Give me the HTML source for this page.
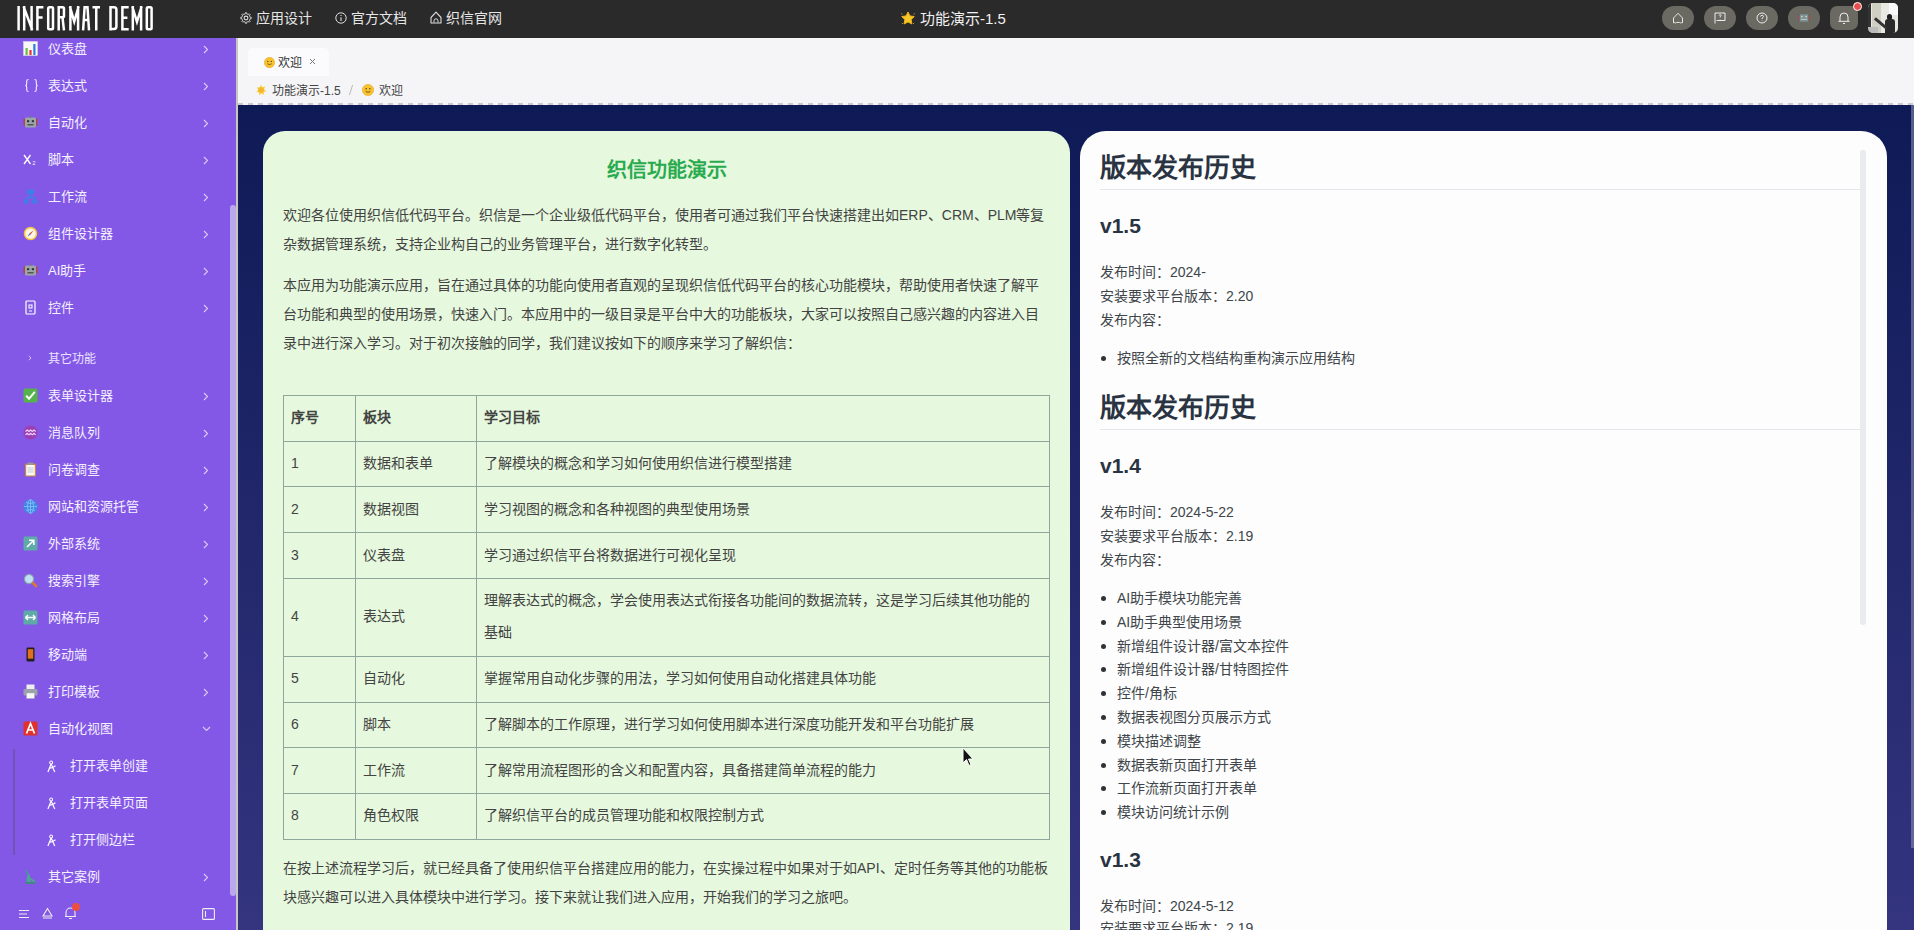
<!DOCTYPE html>
<html lang="zh-CN"><head><meta charset="utf-8">
<style>
*{box-sizing:border-box;margin:0;padding:0}
html,body{width:1914px;height:930px;overflow:hidden;font-family:"Liberation Sans",sans-serif;}
body{position:relative;background:#f4f4f7}
.abs{position:absolute}
#hdr{left:0;top:0;width:1914px;height:38px;background:#2b2a2b;color:#f0f0f0}
#logo{left:17px;top:2px;font-size:30px;line-height:30px;color:#fff;transform-origin:0 0;transform:scaleX(0.42);white-space:nowrap;letter-spacing:2px}
.nav{top:9px;font-size:14px;line-height:18px;color:#e6e6e6;white-space:nowrap}
.hbtn{top:6px;width:32px;height:24px;border-radius:12px;background:#6a6962}
#side{left:0;top:38px;width:236px;height:892px;background:#8358e6;color:#fff;overflow:hidden}
.si{position:absolute;left:0;width:236px;height:20px;font-size:13px;line-height:20px;color:#f4f0ff;white-space:nowrap}
.si .t{position:absolute;left:48px;top:0}
.si .ic{position:absolute;left:23px;top:2px;width:15px;height:15px}
.si .ar{position:absolute;left:203px;top:6px;width:6px;height:9px}
#sbar{left:236px;top:38px;width:2px;height:892px;background:#c9c6c2}
#topa{left:238px;top:38px;width:1676px;height:67px;background:#f5f5f8}
#main{left:238px;top:105px;width:1676px;height:825px;background:linear-gradient(#0e1a56,#34347f)}
#lc{left:263px;top:131px;width:807px;height:830px;background:#e6f8dd;border-radius:22px;color:#333}
#rc{left:1080px;top:131px;width:807px;height:830px;background:#fcfdfc;border-radius:26px;color:#2b2f33}
.ln{position:absolute;white-space:nowrap;font-size:14px;line-height:20px}
.p{position:absolute;left:20px;white-space:nowrap;font-size:14px;line-height:20px;color:#434343}
table{position:absolute;left:20px;top:264px;width:767px;border-collapse:collapse;font-size:14px;color:#434343}
td{border:1px solid #8fa69a;padding:0 7px 2px;height:45.72px;vertical-align:middle;line-height:32px}
.r1 td{font-weight:bold}
.h1{position:absolute;left:20px;font-size:26px;font-weight:bold;line-height:34px;color:#2a3341}
.h2{position:absolute;left:20px;font-size:21px;font-weight:bold;line-height:28px;color:#2a3341}
.hr{position:absolute;left:20px;width:762px;height:1px;background:#e3e6ea}
.q{position:absolute;left:20px;font-size:14px;line-height:20px;color:#40454b;white-space:nowrap}
.li{position:absolute;left:37px;font-size:14px;line-height:20px;color:#40454b;white-space:nowrap}
.li:before{content:"";position:absolute;left:-16px;top:8px;width:5px;height:5px;border-radius:3px;background:#2f3338}

</style></head><body>
<div id="hdr" class="abs">
  <svg class="abs" style="left:0;top:0" width="160" height="38" viewBox="0 0 160 38"><g fill="none" stroke="#fff" stroke-width="2.5" stroke-linejoin="miter" stroke-linecap="butt">
   <path d="M18.6 6v24.4"/>
   <path d="M24.2 30.4V6M23.6 6.6l8.6 23.2M31.6 6v24.4"/>
   <path d="M37.4 30.4V7.25H43.4M37.4 17.5H42.6"/>
   <path d="M48.2 8.5q0-1.25 1.25-1.25h2.3q1.25 0 1.25 1.25v19.5q0 1.25-1.25 1.25h-2.3q-1.25 0-1.25-1.25z"/>
   <path d="M58.7 30.4V7.25h4q1.25 0 1.25 1.25v7.5q0 1.25-1.25 1.25h-4M62.5 17.2l1.45 13.2"/>
   <path d="M70.4 30.4V6M69.9 6.6l4.35 15 4.35-15M78.1 6v24.4"/>
   <path d="M83.1 30.4L84.6 7.25h2.9l1.5 23.15M83.9 20h4.3"/>
   <path d="M92.5 7.25h7.5M96.25 7.25v23.15"/>
   <path d="M110.5 30.4V7.25h3.5q2.4 0 2.4 2.4v16.9q0 2.4-2.4 2.4h-3.5"/>
   <path d="M128.7 7.25h-6.3V29.15h6.3M122.4 17.7h5"/>
   <path d="M132.8 30.4V6M132.3 6.6l4.65 15.2 4.65-15.2M141.1 6v24.4"/>
   <path d="M146.8 8.5q0-1.25 1.25-1.25h2.3q1.25 0 1.25 1.25v19.5q0 1.25-1.25 1.25h-2.3q-1.25 0-1.25-1.25z"/>
  </g></svg>
  <svg class="abs" style="left:240px;top:12px" width="12" height="12" viewBox="0 0 12 12"><circle cx="6" cy="6" r="1.9" fill="none" stroke="#ddd" stroke-width="1.1"/><path d="M9.91 5.14 L11.26 5.32 L11.26 6.68 L9.91 6.86 L9.70 7.53 L9.37 8.16 L10.20 9.23 L9.23 10.20 L8.16 9.37 L7.53 9.70 L6.86 9.91 L6.68 11.26 L5.32 11.26 L5.14 9.91 L4.47 9.70 L3.84 9.37 L2.77 10.20 L1.80 9.23 L2.63 8.16 L2.30 7.53 L2.09 6.86 L0.74 6.68 L0.74 5.32 L2.09 5.14 L2.30 4.47 L2.63 3.84 L1.80 2.77 L2.77 1.80 L3.84 2.63 L4.47 2.30 L5.14 2.09 L5.32 0.74 L6.68 0.74 L6.86 2.09 L7.53 2.30 L8.16 2.63 L9.23 1.80 L10.20 2.77 L9.37 3.84 L9.70 4.47Z" fill="none" stroke="#ddd" stroke-width=".9" stroke-linejoin="round"/></svg>
  <div class="abs nav" style="left:256px">应用设计</div>
  <svg class="abs" style="left:335px;top:12px" width="12" height="12" viewBox="0 0 12 12"><circle cx="6" cy="6" r="5.2" fill="none" stroke="#ddd" stroke-width="1"/><path d="M6 5.2v3.8M6 3v1" stroke="#ddd" stroke-width="1.1"/></svg>
  <div class="abs nav" style="left:351px">官方文档</div>
  <svg class="abs" style="left:430px;top:11px" width="12" height="13" viewBox="0 0 12 13"><path d="M1 6.5L6 1.2l5 5.3V12H1z" fill="none" stroke="#ddd" stroke-width="1.1" stroke-linejoin="round"/><path d="M4 11.5V9.8a2 2 0 0 1 4 0v1.7" fill="none" stroke="#ddd" stroke-width="1"/></svg>
  <div class="abs nav" style="left:446px">织信官网</div>
  <svg class="abs" style="left:900px;top:10px" width="16" height="16" viewBox="0 0 16 16"><path d="M8.00 2.00 L9.94 5.93 L14.28 6.56 L11.14 9.62 L11.88 13.94 L8.00 11.90 L4.12 13.94 L4.86 9.62 L1.72 6.56 L6.06 5.93Z" fill="#f8c82a" stroke="#f0b418" stroke-width="1" stroke-linejoin="round"/><path d="M1.2 3.5l1.2.8M14.8 3.5l-1.2.8M2 14l1-1M14 14l-1-1" stroke="#e8b030" stroke-width=".8"/></svg>
  <div class="abs nav" style="left:920px;font-size:15px;top:10px;color:#f2f2f2">功能演示-1.5</div>
  <div class="abs hbtn" style="left:1662px"><svg class="abs" style="left:10px;top:6px" width="12" height="12" viewBox="0 0 12 12"><path d="M1.5 10.8V6L6 1.3 10.5 6v4.8q-1.5-.6-2.2.2-.6-.8-2.3-.6-1.7-.2-2.3.6-.7-.8-2.2-.2z" fill="none" stroke="#e8e8e8" stroke-width="1"/></svg></div>
  <div class="abs hbtn" style="left:1704px"><svg class="abs" style="left:10px;top:6px" width="12" height="12" viewBox="0 0 12 12"><path d="M1 11.5V1h10v7.5H2.5" fill="none" stroke="#eee" stroke-width="1"/><path d="M5 3.6q.2-1 1.1-1 1 0 1 .9 0 .7-1 1.2v.8M6.1 7v.5" fill="none" stroke="#eee" stroke-width=".9"/></svg></div>
  <div class="abs hbtn" style="left:1746px"><svg class="abs" style="left:10px;top:6px" width="12" height="12" viewBox="0 0 12 12"><circle cx="6" cy="6" r="5" fill="none" stroke="#eee" stroke-width="1"/><path d="M4.4 4.6q.2-1.3 1.6-1.3 1.5 0 1.5 1.2 0 .9-1.4 1.5v1M6.1 8.4v.6" fill="none" stroke="#eee" stroke-width=".9"/></svg></div>
  <div class="abs hbtn" style="left:1788px"><svg class="abs" style="left:10px;top:7px;opacity:.75" width="12" height="10" viewBox="0 0 14 10"><rect x="0" y="2" width="2" height="6" fill="#a04848"/><rect x="12" y="2" width="2" height="6" fill="#a04848"/><rect x="2" y="0.5" width="10" height="9" rx="1" fill="#7fa0a3"/><rect x="3.5" y="2.5" width="2" height="1.6" fill="#eee"/><rect x="8.5" y="2.5" width="2" height="1.6" fill="#eee"/><rect x="3.5" y="6" width="7" height="1.3" fill="#ddd"/></svg></div>
  <div class="abs hbtn" style="left:1830px;width:28px;border-radius:7px"><svg class="abs" style="left:8px;top:5px" width="12" height="14" viewBox="0 0 12 14"><path d="M2 10V6a4 4 0 0 1 8 0v4M.5 10.3h11M5 12.5h2" fill="none" stroke="#eee" stroke-width="1"/></svg></div>
  <div class="abs" style="left:1868px;top:3px;width:30px;height:30px;border-radius:5px;overflow:hidden;background:#e9e9e4">
    <div class="abs" style="left:0;top:0;width:3px;height:30px;background:#333"></div>
    <div class="abs" style="left:4px;top:0;width:9px;height:30px;background:#d0cfc3"></div>
    <div class="abs" style="left:21px;top:0;width:9px;height:12px;background:#fafafa"></div>
    <div class="abs" style="left:19px;top:11px;width:5px;height:6px;border-radius:3px;background:#1e1e1e"></div>
    <div class="abs" style="left:17px;top:16px;width:10px;height:14px;border-radius:3px 3px 0 0;background:#2a2a2a"></div>
    <div class="abs" style="left:5px;top:19px;width:16px;height:3px;background:#333;transform:rotate(40deg)"></div>
    <div class="abs" style="left:0;top:24px;width:10px;height:6px;background:#bbb"></div>
  </div>
  <div class="abs" style="left:1852.5px;top:1.5px;width:9px;height:9px;border-radius:5px;background:#ea4d4d;border:1px solid #fff"></div>
</div>
<div id="side" class="abs">
<div class="si" style="top:1px"><svg class="ic" viewBox="0 0 15 15"><rect x="0.5" y="0.5" width="14" height="14" fill="#f8f8f8" stroke="#ddd" stroke-width=".5"/><rect x="2.5" y="7" width="2.2" height="7" fill="#6dbb45"/><rect x="6.4" y="9" width="2.2" height="5" fill="#e33"/><rect x="10.3" y="3" width="2.2" height="11" fill="#2a7de1"/></svg><span class="t">仪表盘</span><svg class="ar" viewBox="0 0 6 9"><path d="M1 1l3.5 3.5L1 8" fill="none" stroke="#d9ccf7" stroke-width="1.1"/></svg></div>
<div class="si" style="top:38px"><svg class="ic" style="left:24px" viewBox="0 0 15 15"><path d="M4.5 1.5q-1.8 0-1.8 1.8v2.4q0 1.8-1.4 1.8 1.4 0 1.4 1.8v2.4q0 1.8 1.8 1.8M10.5 1.5q1.8 0 1.8 1.8v2.4q0 1.8 1.4 1.8-1.4 0-1.4 1.8v2.4q0 1.8-1.8 1.8" fill="none" stroke="#f4f0ff" stroke-width="1.1"/></svg><span class="t">表达式</span><svg class="ar" viewBox="0 0 6 9"><path d="M1 1l3.5 3.5L1 8" fill="none" stroke="#d9ccf7" stroke-width="1.1"/></svg></div>
<div class="si" style="top:75px"><svg class="ic" viewBox="0 0 15 15"><rect x="0.5" y="3.5" width="1.8" height="7" fill="#b0473f"/><rect x="12.7" y="3.5" width="1.8" height="7" fill="#b0473f"/><rect x="2" y="2.5" width="11" height="10" rx="1.5" fill="#9aa6a8"/><rect x="6.8" y="0.5" width="1.4" height="2.2" fill="#777"/><rect x="4" y="5.2" width="2.2" height="2" fill="#333"/><rect x="8.8" y="5.2" width="2.2" height="2" fill="#333"/><rect x="4.5" y="9" width="6" height="1.5" fill="#555"/></svg><span class="t">自动化</span><svg class="ar" viewBox="0 0 6 9"><path d="M1 1l3.5 3.5L1 8" fill="none" stroke="#d9ccf7" stroke-width="1.1"/></svg></div>
<div class="si" style="top:112px"><svg class="ic" viewBox="0 0 15 15"><path d="M1 3l6.5 9M7.5 3L1 12" stroke="#fff" stroke-width="1.3"/><text x="9.5" y="13" font-size="5" fill="#fff" font-family="Liberation Sans">2</text></svg><span class="t">脚本</span><svg class="ar" viewBox="0 0 6 9"><path d="M1 1l3.5 3.5L1 8" fill="none" stroke="#d9ccf7" stroke-width="1.1"/></svg></div>
<div class="si" style="top:149px"><svg class="ic" viewBox="0 0 15 15"><rect x="4" y="0.5" width="7" height="5" rx="1" fill="#3b82e8"/><path d="M7.5 5.5v3M3.5 8.5h8M3.5 8.5v2M11.5 8.5v2" stroke="#3b82e8" stroke-width="1.4"/><rect x="1" y="10.5" width="4.5" height="4" rx="1" fill="#3b82e8"/><rect x="9.5" y="10.5" width="4.5" height="4" rx="1" fill="#3b82e8"/></svg><span class="t">工作流</span><svg class="ar" viewBox="0 0 6 9"><path d="M1 1l3.5 3.5L1 8" fill="none" stroke="#d9ccf7" stroke-width="1.1"/></svg></div>
<div class="si" style="top:186px"><svg class="ic" viewBox="0 0 15 15"><circle cx="7.5" cy="7.5" r="6.8" fill="#f5c242"/><circle cx="7.5" cy="7.5" r="5.3" fill="#fdf6e0"/><path d="M10.5 4.5L8 8 4.5 10.5 7 7z" fill="#e23b3b"/><path d="M4.5 10.5L7 7 8 8z" fill="#3a8bd8"/></svg><span class="t">组件设计器</span><svg class="ar" viewBox="0 0 6 9"><path d="M1 1l3.5 3.5L1 8" fill="none" stroke="#d9ccf7" stroke-width="1.1"/></svg></div>
<div class="si" style="top:223px"><svg class="ic" viewBox="0 0 15 15"><rect x="0.5" y="3.5" width="1.8" height="7" fill="#b0473f"/><rect x="12.7" y="3.5" width="1.8" height="7" fill="#b0473f"/><rect x="2" y="2.5" width="11" height="10" rx="1.5" fill="#9aa6a8"/><rect x="6.8" y="0.5" width="1.4" height="2.2" fill="#777"/><rect x="4" y="5.2" width="2.2" height="2" fill="#333"/><rect x="8.8" y="5.2" width="2.2" height="2" fill="#333"/><rect x="4.5" y="9" width="6" height="1.5" fill="#555"/></svg><span class="t">AI助手</span><svg class="ar" viewBox="0 0 6 9"><path d="M1 1l3.5 3.5L1 8" fill="none" stroke="#d9ccf7" stroke-width="1.1"/></svg></div>
<div class="si" style="top:260px"><svg class="ic" viewBox="0 0 15 15"><rect x="3" y="1" width="9" height="13" rx="1" fill="none" stroke="#fff" stroke-width="1.2"/><rect x="6" y="5" width="3" height="3" fill="none" stroke="#fff" stroke-width="1"/><path d="M6 11h3" stroke="#fff"/></svg><span class="t">控件</span><svg class="ar" viewBox="0 0 6 9"><path d="M1 1l3.5 3.5L1 8" fill="none" stroke="#d9ccf7" stroke-width="1.1"/></svg></div>
<div class="si" style="top:348px"><svg class="ic" viewBox="0 0 15 15"><rect x="0.5" y="0.5" width="14" height="14" rx="2" fill="#56b34b"/><path d="M3.2 7.8l2.8 3 5.8-7" fill="none" stroke="#fff" stroke-width="2"/></svg><span class="t">表单设计器</span><svg class="ar" viewBox="0 0 6 9"><path d="M1 1l3.5 3.5L1 8" fill="none" stroke="#d9ccf7" stroke-width="1.1"/></svg></div>
<div class="si" style="top:385px"><svg class="ic" viewBox="0 0 15 15"><circle cx="7.5" cy="7.5" r="7" fill="#9b3fb2"/><path d="M2.5 6.5l1.7-1.5 1.7 1.5 1.7-1.5 1.7 1.5 1.7-1.5 1.7 1.5M2.5 9.8l1.7-1.5 1.7 1.5 1.7-1.5 1.7 1.5 1.7-1.5 1.7 1.5" fill="none" stroke="#f0d8ff" stroke-width="1.1"/></svg><span class="t">消息队列</span><svg class="ar" viewBox="0 0 6 9"><path d="M1 1l3.5 3.5L1 8" fill="none" stroke="#d9ccf7" stroke-width="1.1"/></svg></div>
<div class="si" style="top:422px"><svg class="ic" viewBox="0 0 15 15"><rect x="2" y="1.5" width="11" height="13" rx="1" fill="#c98a3c"/><rect x="3.2" y="3" width="8.6" height="10.5" fill="#fafafa"/><rect x="5" y="0.5" width="5" height="2.5" rx=".6" fill="#999"/><path d="M4.5 6h6M4.5 8h6M4.5 10h6" stroke="#bbb" stroke-width=".8"/></svg><span class="t">问卷调查</span><svg class="ar" viewBox="0 0 6 9"><path d="M1 1l3.5 3.5L1 8" fill="none" stroke="#d9ccf7" stroke-width="1.1"/></svg></div>
<div class="si" style="top:459px"><svg class="ic" viewBox="0 0 15 15"><circle cx="7.5" cy="7.5" r="7" fill="#3d8ae6"/><path d="M1 7.5h13M7.5 .5v14M3 3.5q4.5 2 9 0M3 11.5q4.5-2 9 0" fill="none" stroke="#8fc0f7" stroke-width=".8"/><ellipse cx="7.5" cy="7.5" rx="3" ry="7" fill="none" stroke="#8fc0f7" stroke-width=".8"/></svg><span class="t">网站和资源托管</span><svg class="ar" viewBox="0 0 6 9"><path d="M1 1l3.5 3.5L1 8" fill="none" stroke="#d9ccf7" stroke-width="1.1"/></svg></div>
<div class="si" style="top:496px"><svg class="ic" viewBox="0 0 15 15"><rect x="0.5" y="0.5" width="14" height="14" rx="1.5" fill="#5fa9a8"/><path d="M4 11l6.5-6.5M6 4.2h4.8V9" fill="none" stroke="#fff" stroke-width="1.6"/></svg><span class="t">外部系统</span><svg class="ar" viewBox="0 0 6 9"><path d="M1 1l3.5 3.5L1 8" fill="none" stroke="#d9ccf7" stroke-width="1.1"/></svg></div>
<div class="si" style="top:533px"><svg class="ic" viewBox="0 0 15 15"><circle cx="6" cy="6" r="4.6" fill="#bfe1f3" stroke="#8a9fb0" stroke-width="1.2"/><path d="M9.3 9.3l4.5 4.5" stroke="#e07b22" stroke-width="2.4"/></svg><span class="t">搜索引擎</span><svg class="ar" viewBox="0 0 6 9"><path d="M1 1l3.5 3.5L1 8" fill="none" stroke="#d9ccf7" stroke-width="1.1"/></svg></div>
<div class="si" style="top:570px"><svg class="ic" viewBox="0 0 15 15"><rect x="0.5" y="0.5" width="14" height="14" rx="1.5" fill="#5fa9a8"/><path d="M2.5 7.5h10M2.5 7.5l2.5-2.5M2.5 7.5l2.5 2.5M12.5 7.5l-2.5-2.5M12.5 7.5l-2.5 2.5" fill="none" stroke="#fff" stroke-width="1.4"/></svg><span class="t">网格布局</span><svg class="ar" viewBox="0 0 6 9"><path d="M1 1l3.5 3.5L1 8" fill="none" stroke="#d9ccf7" stroke-width="1.1"/></svg></div>
<div class="si" style="top:607px"><svg class="ic" viewBox="0 0 15 15"><rect x="3.5" y="0.5" width="8" height="14" rx="1.2" fill="#222"/><rect x="4.8" y="2.2" width="5.4" height="9.5" fill="#e07020"/></svg><span class="t">移动端</span><svg class="ar" viewBox="0 0 6 9"><path d="M1 1l3.5 3.5L1 8" fill="none" stroke="#d9ccf7" stroke-width="1.1"/></svg></div>
<div class="si" style="top:644px"><svg class="ic" viewBox="0 0 15 15"><rect x="3.5" y="0.5" width="8" height="5" fill="#eee"/><rect x="0.5" y="5" width="14" height="6.5" rx="1.2" fill="#9aa3ab"/><rect x="3.5" y="9" width="8" height="5.5" fill="#f8f8f8" stroke="#aaa" stroke-width=".5"/></svg><span class="t">打印模板</span><svg class="ar" viewBox="0 0 6 9"><path d="M1 1l3.5 3.5L1 8" fill="none" stroke="#d9ccf7" stroke-width="1.1"/></svg></div>
<div class="si" style="top:681px"><svg class="ic" viewBox="0 0 15 15"><rect x="0.5" y="0.5" width="14" height="14" rx="1.5" fill="#e0312d"/><path d="M3.5 12.5L7.5 2.5l4 10M5.2 9h4.6" fill="none" stroke="#fff" stroke-width="1.7"/></svg><span class="t">自动化视图</span><svg class="ar" style="top:7px;left:202px;width:9px;height:6px" viewBox="0 0 9 6"><path d="M1 1l3.5 3.5L8 1" fill="none" stroke="#d9ccf7" stroke-width="1.1"/></svg></div>
<div class="si" style="top:829px"><svg class="ic" viewBox="0 0 15 15"><path d="M3 1.5l2 4" stroke="#3fa088" stroke-width="1.5"/><path d="M5 5q2 0 2 3l1 6.5H3.5L4 8z" fill="#4ca792"/><path d="M6 9l6 4" stroke="#4ca792" stroke-width="2"/><rect x="2.5" y="13" width="10" height="1.8" fill="#3d8a78"/></svg><span class="t">其它案例</span><svg class="ar" viewBox="0 0 6 9"><path d="M1 1l3.5 3.5L1 8" fill="none" stroke="#d9ccf7" stroke-width="1.1"/></svg></div>
<div class="si" style="top:310px"><svg class="ar" style="left:28px;top:7px;width:4px;height:6px" viewBox="0 0 4 6"><path d="M.8 .8L3 3 .8 5.2" fill="none" stroke="#d9ccf7" stroke-width=".9"/></svg><span class="t" style="color:#ece4ff;font-size:12px;top:1px">其它功能</span></div>
<div class="si" style="top:718px"><svg class="ic" style="left:47px;top:4px;width:11px;height:13px" viewBox="0 0 12 13"><circle cx="4.5" cy="2.2" r="1.6" fill="none" stroke="#fff" stroke-width="1.1"/><path d="M4.5 3.8L1 12.5M4.5 3.8L8.5 12.5M2.8 8.2q3 .3 6.4-2.5" fill="none" stroke="#fff" stroke-width="1.3"/></svg><span class="t" style="left:70px">打开表单创建</span></div>
<div class="si" style="top:755px"><svg class="ic" style="left:47px;top:4px;width:11px;height:13px" viewBox="0 0 12 13"><circle cx="4.5" cy="2.2" r="1.6" fill="none" stroke="#fff" stroke-width="1.1"/><path d="M4.5 3.8L1 12.5M4.5 3.8L8.5 12.5M2.8 8.2q3 .3 6.4-2.5" fill="none" stroke="#fff" stroke-width="1.3"/></svg><span class="t" style="left:70px">打开表单页面</span></div>
<div class="si" style="top:792px"><svg class="ic" style="left:47px;top:4px;width:11px;height:13px" viewBox="0 0 12 13"><circle cx="4.5" cy="2.2" r="1.6" fill="none" stroke="#fff" stroke-width="1.1"/><path d="M4.5 3.8L1 12.5M4.5 3.8L8.5 12.5M2.8 8.2q3 .3 6.4-2.5" fill="none" stroke="#fff" stroke-width="1.3"/></svg><span class="t" style="left:70px">打开侧边栏</span></div>
<div class="abs" style="left:13px;top:711px;width:2px;height:106px;background:#6a55a6;opacity:.8"></div>
<div class="abs" style="left:230px;top:167px;width:6px;height:691px;border-radius:3px;background:#b9a8ee"></div>
<svg class="abs" style="left:18px;top:870px" width="12" height="12" viewBox="0 0 12 12"><path d="M1 2.5h10M1 6h8M1 9.5h10" stroke="#eee" stroke-width="1.1"/></svg>
<svg class="abs" style="left:42px;top:869px" width="11" height="12" viewBox="0 0 11 12"><path d="M5.5 1.5L1 9h9z" fill="none" stroke="#eee" stroke-width="1.1"/><path d="M1 11h9" stroke="#eee"/></svg>
<svg class="abs" style="left:64px;top:868px" width="13" height="14" viewBox="0 0 13 14"><path d="M2 10.5V6.5a4.5 4.5 0 0 1 9 0v4zM1 10.5h11M5 12.5h3" fill="none" stroke="#eee" stroke-width="1.1"/></svg>
<div class="abs" style="left:72px;top:865px;width:8px;height:8px;border-radius:4px;background:#ea4f43"></div>
<svg class="abs" style="left:202px;top:870px" width="13" height="12" viewBox="0 0 13 12"><rect x=".6" y=".6" width="11.8" height="10.8" rx="1" fill="none" stroke="#eee" stroke-width="1.1"/><path d="M3.5 3v6" stroke="#eee" stroke-width="1.1"/></svg>
</div>
<div id="sbar" class="abs"></div>
<div id="topa" class="abs">
  <div class="abs" style="left:10px;top:10px;width:81px;height:28px;background:#fbfbfd;border-radius:5px 5px 0 0"></div>
  <svg class="abs" style="left:26px;top:19px" width="11" height="11" viewBox="0 0 12 12"><circle cx="6" cy="6" r="5.6" fill="#f7c430" stroke="#e9a21a" stroke-width=".6"/><circle cx="4.1" cy="4.8" r=".75" fill="#5a3a10"/><circle cx="7.9" cy="4.8" r=".75" fill="#5a3a10"/><path d="M3.6 7.4q2.4 1.8 4.8 0" fill="none" stroke="#5a3a10" stroke-width=".8"/></svg>
  <div class="abs" style="left:40px;top:17px;font-size:12px;line-height:16px;color:#333;white-space:nowrap">欢迎</div>
  <svg class="abs" style="left:71px;top:20px" width="7" height="7" viewBox="0 0 7 7"><path d="M1 1l5 5M6 1L1 6" stroke="#777" stroke-width="1"/></svg>
  <svg class="abs" style="left:17px;top:46px" width="12" height="12" viewBox="0 0 12 12"><path d="M6 .5l1.2 2.8 3-.8-1.2 2.9 2.5 1.6-2.9.9.6 3-2.5-1.7L4.3 11.6l.1-3.1-3-.4 2-2.3-1.6-2.6 3 .4z" fill="#f6cf3a"/><circle cx="6" cy="6" r="2.8" fill="#f4b62a"/></svg>
  <div class="abs" style="left:34px;top:45px;font-size:12px;line-height:16px;color:#444;white-space:nowrap">功能演示-1.5</div>
  <svg class="abs" style="left:110px;top:46px" width="6" height="12" viewBox="0 0 6 12"><path d="M4.6 1L1.4 11" stroke="#bbb" stroke-width="1"/></svg>
  <svg class="abs" style="left:124px;top:46px" width="12" height="12" viewBox="0 0 12 12"><circle cx="6" cy="6" r="5.6" fill="#f7c430" stroke="#e9a21a" stroke-width=".6"/><circle cx="4.1" cy="4.8" r=".75" fill="#5a3a10"/><circle cx="7.9" cy="4.8" r=".75" fill="#5a3a10"/><path d="M3.6 7.4q2.4 1.8 4.8 0" fill="none" stroke="#5a3a10" stroke-width=".8"/></svg>
  <div class="abs" style="left:141px;top:45px;font-size:12px;line-height:16px;color:#444;white-space:nowrap">欢迎</div>
  <div class="abs" style="left:0;top:65px;width:1676px;height:1.5px;background:repeating-linear-gradient(90deg,#c9c9cf 0 5px,transparent 5px 10px)"></div>
</div>
<div id="main" class="abs"></div>
<div id="lc" class="abs">
  <div class="abs" style="left:0;top:26px;width:807px;text-align:center;font-size:20px;line-height:26px;font-weight:bold;color:#28ab4e">织信功能演示</div>
  <div class="p" style="top:74px">欢迎各位使用织信低代码平台。织信是一个企业级低代码平台，使用者可通过我们平台快速搭建出如ERP、CRM、PLM等复</div>
  <div class="p" style="top:103px">杂数据管理系统，支持企业构自己的业务管理平台，进行数字化转型。</div>
  <div class="p" style="top:144px">本应用为功能演示应用，旨在通过具体的功能向使用者直观的呈现织信低代码平台的核心功能模块，帮助使用者快速了解平</div>
  <div class="p" style="top:173px">台功能和典型的使用场景，快速入门。本应用中的一级目录是平台中大的功能板块，大家可以按照自己感兴趣的内容进入目</div>
  <div class="p" style="top:202px">录中进行深入学习。对于初次接触的同学，我们建议按如下的顺序来学习了解织信：</div>
  <table>
    <colgroup><col style="width:72px"><col style="width:121px"><col></colgroup>
    <tr class="r1"><td>序号</td><td>板块</td><td>学习目标</td></tr>
    <tr><td>1</td><td>数据和表单</td><td>了解模块的概念和学习如何使用织信进行模型搭建</td></tr>
    <tr><td>2</td><td>数据视图</td><td>学习视图的概念和各种视图的典型使用场景</td></tr>
    <tr><td>3</td><td>仪表盘</td><td>学习通过织信平台将数据进行可视化呈现</td></tr>
    <tr><td style="height:78px">4</td><td>表达式</td><td>理解表达式的概念，学会使用表达式衔接各功能间的数据流转，这是学习后续其他功能的<br>基础</td></tr>
    <tr><td>5</td><td>自动化</td><td>掌握常用自动化步骤的用法，学习如何使用自动化搭建具体功能</td></tr>
    <tr><td>6</td><td>脚本</td><td>了解脚本的工作原理，进行学习如何使用脚本进行深度功能开发和平台功能扩展</td></tr>
    <tr><td>7</td><td>工作流</td><td>了解常用流程图形的含义和配置内容，具备搭建简单流程的能力</td></tr>
    <tr><td>8</td><td>角色权限</td><td>了解织信平台的成员管理功能和权限控制方式</td></tr>
  </table>
  <div class="p" style="top:727px">在按上述流程学习后，就已经具备了使用织信平台搭建应用的能力，在实操过程中如果对于如API、定时任务等其他的功能板</div>
  <div class="p" style="top:756px">块感兴趣可以进入具体模块中进行学习。接下来就让我们进入应用，开始我们的学习之旅吧。</div>
</div>
<div id="rc" class="abs">
  <div class="h1" style="top:20px">版本发布历史</div>
  <div class="hr" style="top:58px"></div>
  <div class="h2" style="top:81px">v1.5</div>
  <div class="q" style="top:131px">发布时间：2024-</div>
  <div class="q" style="top:155px">安装要求平台版本：2.20</div>
  <div class="q" style="top:179px">发布内容：</div>
  <div class="li" style="top:217px">按照全新的文档结构重构演示应用结构</div>
  <div class="h1" style="top:260px">版本发布历史</div>
  <div class="hr" style="top:298px"></div>
  <div class="h2" style="top:321px">v1.4</div>
  <div class="q" style="top:371px">发布时间：2024-5-22</div>
  <div class="q" style="top:395px">安装要求平台版本：2.19</div>
  <div class="q" style="top:419px">发布内容：</div>
  <div class="li" style="top:457px">AI助手模块功能完善</div>
  <div class="li" style="top:481px">AI助手典型使用场景</div>
  <div class="li" style="top:505px">新增组件设计器/富文本控件</div>
  <div class="li" style="top:528px">新增组件设计器/甘特图控件</div>
  <div class="li" style="top:552px">控件/角标</div>
  <div class="li" style="top:576px">数据表视图分页展示方式</div>
  <div class="li" style="top:600px">模块描述调整</div>
  <div class="li" style="top:624px">数据表新页面打开表单</div>
  <div class="li" style="top:647px">工作流新页面打开表单</div>
  <div class="li" style="top:671px">模块访问统计示例</div>
  <div class="h2" style="top:715px">v1.3</div>
  <div class="q" style="top:765px">发布时间：2024-5-12</div>
  <div class="q" style="top:787px">安装要求平台版本：2.19</div>
  <div class="abs" style="left:780px;top:19px;width:6px;height:475px;border-radius:3px;background:#e9ebee"></div>
</div>
<div class="abs" style="left:1911px;top:105px;width:3px;height:743px;background:#8888b4;opacity:.6"></div>
<svg class="abs" style="left:962px;top:747px" width="12" height="20" viewBox="0 0 12 20"><path d="M1 1v15l3.5-3.5 2.5 6 2-1-2.5-5.5H11z" fill="#111" stroke="#fff" stroke-width="1"/></svg>

</body></html>
